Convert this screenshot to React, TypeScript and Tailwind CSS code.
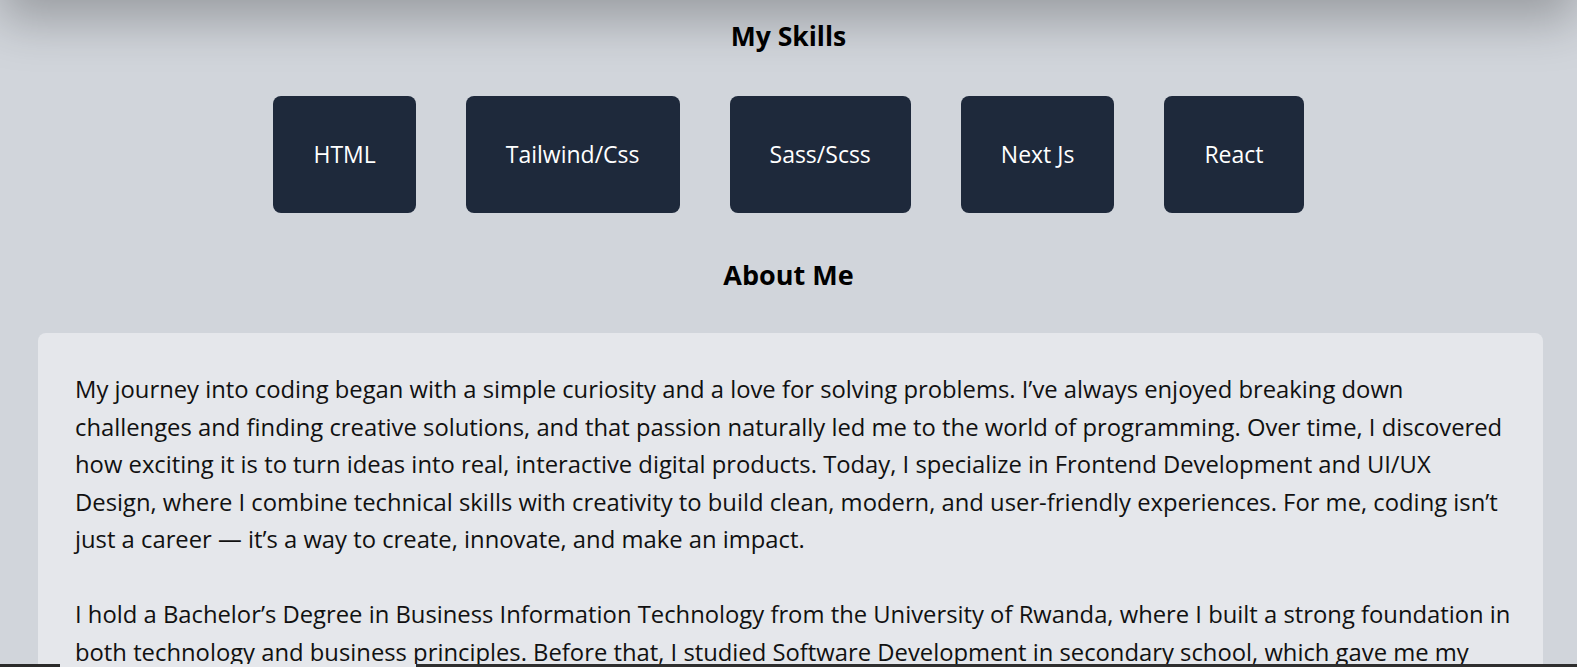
import React from "react";

const skills = ["HTML", "Tailwind/Css", "Sass/Scss", "Next Js", "React"];

export default function App() {
  return (
    <div
      className="min-h-screen bg-[#d1d5db] text-black overflow-hidden relative"
      style={{ fontFamily: "'Open Sans', 'Noto Sans', sans-serif" }}
    >
      {/* navbar sits just above the view, only its shadow shows */}
      <div className="fixed left-0 right-0 -top-[80px] h-[80px] bg-[#d1d5db] shadow-[0_20px_50px_rgba(0,0,0,0.27)] z-10" />

      <section className="pt-5 flex flex-col items-center">
        <h2 className="text-[26.5px] leading-8 font-bold">My Skills</h2>
        <div className="mt-11 flex justify-center gap-[50px]">
          {skills.map((s) => (
            <div
              key={s}
              className="h-[117px] px-10 flex items-center justify-center rounded-lg bg-[#1e293b] text-white text-[23px]"
            >
              {s}
            </div>
          ))}
        </div>
        <h2 className="mt-[46px] text-[27px] leading-8 font-bold">About Me</h2>
      </section>

      <div className="mt-[42px] ml-[38px] mr-[34px] rounded-lg bg-[#e5e7eb] pl-[37px] pr-[30px] pt-[38px] pb-10 text-[23.8px] leading-[37.5px] text-[#111]">
        <p>
          My journey into coding began with a simple curiosity and a love for
          solving problems. I’ve always enjoyed breaking down challenges and
          finding creative solutions, and that passion naturally led me to the
          world of programming. Over time, I discovered how exciting it is to
          turn ideas into real, interactive digital products. Today, I
          specialize in Frontend Development and UI/UX Design, where I combine
          technical skills with creativity to build clean, modern, and
          user-friendly experiences. For me, coding isn’t just a career — it’s a
          way to create, innovate, and make an impact.
        </p>
        <p className="mt-[37.5px]">
          I hold a Bachelor’s Degree in Business Information Technology from the
          University of Rwanda, where I built a strong foundation in both
          technology and business principles. Before that, I studied Software
          Development in secondary school, which gave me my first hands-on
          experience with programming and problem solving.
        </p>
      </div>

      <div className="fixed bottom-0 left-0 right-0 h-[3px] flex z-20">
        <div className="w-[60px] bg-[#2a2a2a]" />
        <div className="w-[356px] bg-[#e5e7eb]" />
        <div className="flex-1 bg-[#2f2f2f]" />
      </div>
    </div>
  );
}
